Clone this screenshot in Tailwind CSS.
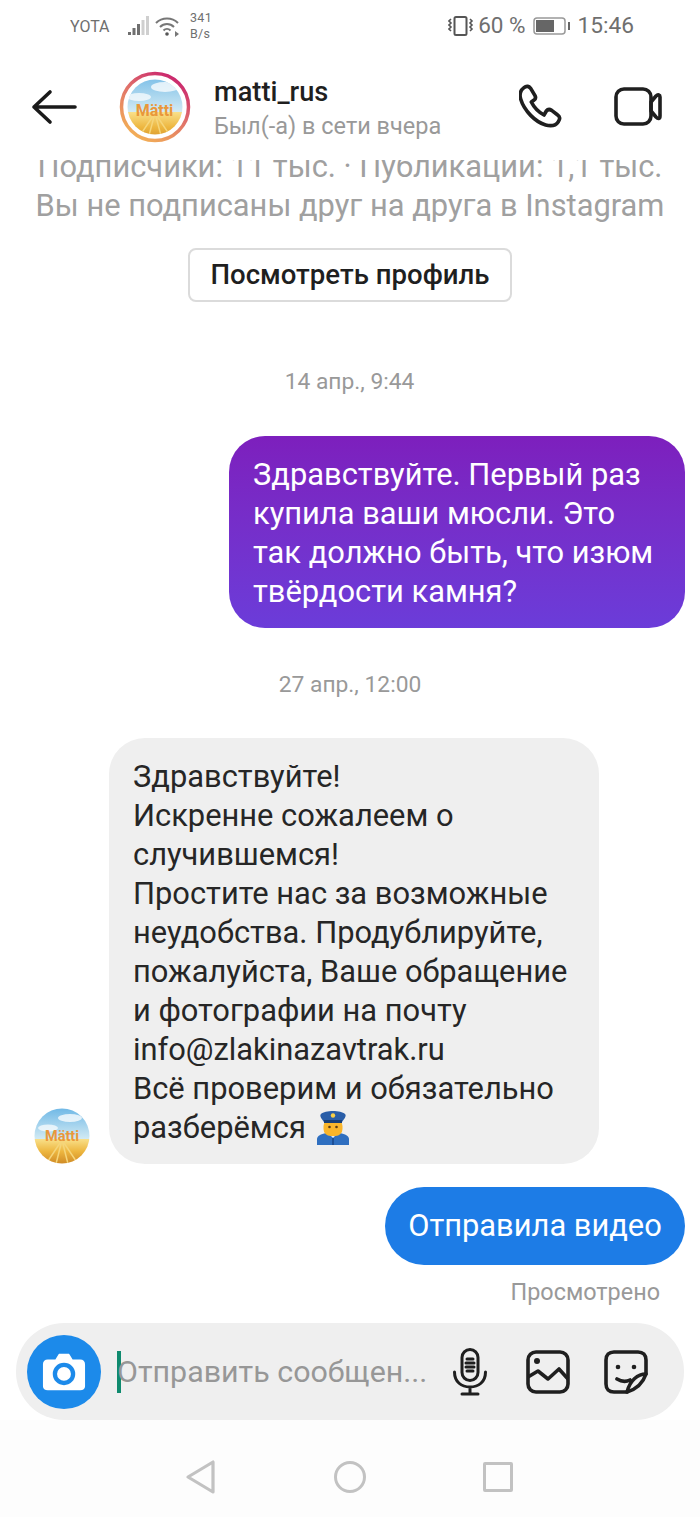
<!DOCTYPE html>
<html lang="ru"><head><meta charset="utf-8">
<script src="https://cdn.jsdelivr.net/npm/@tailwindcss/browser@4"></script>
<title>matti_rus</title></head>
<body class="bg-white">
<div class="w-[700px] h-[1517px] overflow-hidden flex flex-col bg-white text-[#262626] font-['Roboto',sans-serif]">

<!-- status bar -->
<div class="h-[52px] shrink-0 flex items-center pl-[70px] pr-[66px] text-[#6f6f6f]">
  <span class="text-[16px] w-[58px] relative top-px">YOTA</span>
  <svg class="w-[22px] h-[24px]" viewBox="0 0 22 24"><g fill="#6f6f6f"><rect x="0" y="18" width="3" height="3"/><rect x="4.500" y="14" width="3" height="7"/><rect x="9" y="10" width="3" height="11"/></g><g fill="#cfcfcf"><rect x="13.500" y="6" width="3" height="15"/><rect x="18" y="2" width="3" height="19"/></g></svg>
  <svg class="w-[26px] h-[24px] ml-[5px]" viewBox="0 0 26 24" fill="none" stroke="#777" stroke-width="2"><path d="M1 9c6-6 16-6 22 0M5 13c4-4 10-4 14 0M8.500 16.500c2-2 5-2 7 0"/><circle cx="12" cy="20" r="1.800" fill="#555" stroke="none"/><path d="M20 17l4 3-4 3z" fill="#777" stroke="none"/></svg>
  <span class="ml-[9px] w-[24px] text-[12.500px] leading-[16px] tracking-[.3px]">341<br>B/s</span>
  <span class="flex-1"></span>
  <svg class="w-[26px] h-[22px]" viewBox="0 0 26 22" fill="none" stroke="#555"><rect x="6.500" y="2" width="12" height="18" rx="1.500" stroke-width="2"/><path d="M3 4l-2 2 2 2-2 2 2 2-2 2 2 2M22 4l2 2-2 2 2 2-2 2 2 2-2 2" stroke-width="1.600"/></svg>
  <span class="text-[22.500px] ml-[4px]">60 %</span>
  <svg class="w-[38px] h-[20px] ml-[7px]" viewBox="0 0 38 20"><rect x="1" y="2" width="31" height="16" rx="3" fill="none" stroke="#999" stroke-width="1.500"/><rect x="3" y="4" width="18" height="12" fill="#666"/><rect x="35" y="6" width="2" height="8" fill="#666"/></svg>
  <span class="text-[22.700px] ml-[7px]">15:46</span>
</div>

<!-- header -->
<div class="h-[108px] shrink-0 flex items-start bg-white pt-[20px]">
  <svg class="w-[46px] h-[36px] ml-[31px] mt-[17px]" viewBox="0 0 46 36" fill="none" stroke="#1a1a1a" stroke-width="3.600" stroke-linecap="round" stroke-linejoin="round"><path d="M3 18h41M19 3L3 18l16 15"/></svg>
  <svg class="w-[72px] h-[72px] ml-[42px] -mt-px" viewBox="0 0 72 72">
    <defs>
      <linearGradient id="ring" x1="0.800" y1="0" x2="0.200" y2="1"><stop offset="0" stop-color="#c81f6e"/><stop offset=".45" stop-color="#e0706a"/><stop offset="1" stop-color="#f4b455"/></linearGradient>
      <linearGradient id="sky" x1="0" y1="0" x2="0" y2="1"><stop offset="0" stop-color="#6fb8e6"/><stop offset="1" stop-color="#d5ecf4"/></linearGradient>
      <linearGradient id="wheat" x1="0" y1="0" x2="0" y2="1"><stop offset="0" stop-color="#f9e08a"/><stop offset=".5" stop-color="#edb63f"/><stop offset="1" stop-color="#cf8a25"/></linearGradient>
      <clipPath id="c1"><circle cx="36" cy="36" r="27.500"/></clipPath>
    </defs>
    <circle cx="36" cy="36" r="33.500" fill="none" stroke="url(#ring)" stroke-width="3.500"/>
    <g clip-path="url(#c1)"><rect width="72" height="42" fill="url(#sky)"/><ellipse cx="46" cy="16" rx="14" ry="5" fill="#fff" opacity=".75"/><ellipse cx="20" cy="26" rx="12" ry="4" fill="#fff" opacity=".7"/><rect y="41" width="72" height="31" fill="url(#wheat)"/><path d="M36 42L16 72M36 42l-8 30M36 42l8 30M36 42l20 30" stroke="#f5d57a" stroke-width="1.500"/></g>
    <text x="35.500" y="45" text-anchor="middle" font-family="Roboto" font-weight="700" font-size="16" fill="#e9973a">Mätti</text>
  </svg>
  <div class="ml-[23px]">
    <div class="text-[27.200px] leading-[40px] font-medium text-[#1f1f1f]">matti_rus</div>
    <div class="text-[23.500px] leading-[30px] text-[#999] -mt-[1px]">Был(-а) в сети вчера</div>
  </div>
  <span class="flex-1"></span>
  <svg class="w-[44px] h-[44px] mt-[12px]" viewBox="510 255 132 132" fill="none" stroke="#1f1f1f" stroke-width="11" stroke-linejoin="round"><path d="M525 266C533 259 540 262 545 268L558 290C561 296 559 301 554 304L547 309C555 325 570 340 585 348L592 336C596 331 603 331 608 334L626 348C633 353 634 360 628 368C620 380 605 382 590 378C560 370 525 335 515 300C510 285 515 274 525 266Z"/></svg>
  <svg class="w-[48px] h-[40px] ml-[51px] mr-[38px] mt-[15px]" viewBox="0 0 48 40" fill="none" stroke="#1f1f1f" stroke-width="3.600" stroke-linejoin="round"><rect x="2" y="2" width="35" height="35" rx="8"/><path d="M37 15l5-6c2-2 4-1 4 1v19c0 3-2 3-4 1l-5-6z"/></svg>
</div>

<!-- messages -->
<div class="flex-1 min-h-0 overflow-hidden flex flex-col">
  <div class="-mt-[13px] text-center text-[30.850px] leading-[39px] text-[#a0a0a0] whitespace-nowrap">
    <p>Подписчики: 11 тыс. · Публикации: 1,1 тыс.</p>
    <p>Вы не подписаны друг на друга в Instagram</p>
  </div>
  <div class="self-center mt-[23px] w-[324px] h-[54px] rounded-[8px] border-2 border-[#dbdbdb] flex items-center justify-center text-[27.600px] font-medium text-[#1f1f1f] shrink-0">Посмотреть профиль</div>
  <div class="mt-[66px] text-center text-[22.800px] leading-[28px] text-[#999] pr-px">14 апр., 9:44</div>
  <div class="mt-[40px] self-end mr-[15px] w-[456px] h-[192px] shrink-0 rounded-[36px] bg-gradient-to-b from-[#7d1fbd] to-[#6b3cd9] text-white text-[30.850px] leading-[39px] pl-[24px] pt-[19px] whitespace-nowrap">Здравствуйте. Первый раз<br>купила ваши мюсли. Это<br>так должно быть, что изюм<br>твёрдости камня?</div>
  <div class="mt-[43px] text-center text-[22.800px] leading-[28px] text-[#999]">27 апр., 12:00</div>
  <div class="mt-[39px] flex items-end shrink-0">
    <svg class="w-[56px] h-[56px] ml-[34px] shrink-0" viewBox="0 0 56 56">
      <defs><clipPath id="c2"><circle cx="28" cy="28" r="27.500"/></clipPath></defs>
      <g clip-path="url(#c2)"><rect width="56" height="32" fill="url(#sky)"/><ellipse cx="36" cy="10" rx="12" ry="4" fill="#fff" opacity=".75"/><ellipse cx="14" cy="20" rx="10" ry="3.500" fill="#fff" opacity=".7"/><rect y="31" width="56" height="25" fill="url(#wheat)"/><path d="M28 32L12 56M28 32l-6 24M28 32l6 24M28 32l16 24" stroke="#f5d57a" stroke-width="1.500"/></g>
      <text x="28" y="33" text-anchor="middle" font-family="Roboto" font-weight="700" font-size="14.500" fill="#e9973a">Mätti</text>
    </svg>
    <div class="ml-[19px] w-[490px] h-[426px] rounded-[36px] bg-[#efefef] text-[30.850px] leading-[39px] pl-[24px] pt-[19px] whitespace-nowrap">Здравствуйте!<br>Искренне сожалеем о<br>случившемся!<br>Простите нас за возможные<br>неудобства. Продублируйте,<br>пожалуйста, Ваше обращение<br>и фотографии на почту<br>info@zlakinazavtrak.ru<br>Всё проверим и обязательно<br><span class="inline-flex items-center gap-[11px]">разберёмся
      <svg class="w-[32px] h-[35px]" viewBox="0 0 32 35"><path d="M0 35v-6c0-3 4-5 9-6h14c5 1 9 3 9 6v6z" fill="#2f6fc0"/><path d="M11 23l5 5 5-5z" fill="#e8eef7"/><rect x="15" y="28" width="2" height="7" fill="#1d4f96"/><rect x="6.500" y="9" width="19" height="17" rx="7" fill="#f9b52b"/><path d="M7 12C5 9 2 6 4 4c4-4 20-4 24 0 2 2-1 5-3 8z" fill="#2a5ea8"/><rect x="7" y="10" width="18" height="3" fill="#173f78"/><circle cx="16" cy="5.500" r="2.200" fill="#f7cf48"/><circle cx="12.500" cy="17" r="1.300" fill="#5b3a16"/><circle cx="19.500" cy="17" r="1.300" fill="#5b3a16"/></svg></span></div>
  </div>
  <div class="mt-[23px] self-end mr-[15px] w-[300px] h-[78px] shrink-0 rounded-[39px] bg-[#1d7ce6] text-white text-[30.850px] flex items-center justify-center whitespace-nowrap">Отправила видео</div>
  <div class="mt-[13px] self-end mr-[40px] text-[23.400px] leading-[28px] text-[#999]">Просмотрено</div>
</div>

<!-- composer -->
<div class="mx-[16px] h-[97px] shrink-0 rounded-[48px] bg-[#efefef] flex items-center pl-[11px]">
  <div class="w-[74px] h-[74px] rounded-full bg-[#1c8aea] flex items-center justify-center shrink-0">
    <svg class="w-[44px] h-[40px]" viewBox="0 0 46 40"><path d="M6 7h8l3-5c.5-1 1-1 2-1h8c1 0 1.500 0 2 1l3 5h8c3 0 5 2 5 5v23c0 3-2 4-5 4H6c-3 0-5-1-5-4V12c0-3 2-5 5-5z" fill="#fff"/><circle cx="23" cy="22" r="9.500" fill="none" stroke="#1c8aea" stroke-width="4.500"/></svg>
  </div>
  <div class="w-[4px] h-[42px] bg-[#0f8a6e] ml-[16px] shrink-0"></div>
  <span class="text-[30.400px] text-[#979797] ml-[-4px] whitespace-nowrap">Отправить сообщен...</span>
  <span class="flex-1"></span>
  <svg class="w-[34px] h-[48px]" viewBox="0 0 34 48" fill="none" stroke="#1f1f1f" stroke-width="3" stroke-linecap="round"><rect x="9" y="1.500" width="16" height="31" rx="8"/><path d="M1.500 24c0 10 7 15 15.500 15s15.500-5 15.500-15M17 39v6M9 46h16M14 11h6M13 15h8M13 19h8M14 23h6"/></svg>
  <svg class="w-[44px] h-[44px] ml-[39px]" viewBox="0 0 44 44" fill="none" stroke="#1f1f1f" stroke-width="3.600" stroke-linejoin="round"><rect x="2" y="2" width="40" height="40" rx="8"/><circle cx="11" cy="11" r="3" fill="#1f1f1f" stroke="none"/><path d="M2 27l10-6 10 8 11-10 9 10"/></svg>
  <svg class="w-[44px] h-[44px] ml-[34px] mr-[36px]" viewBox="0 0 44 44" fill="none" stroke="#1f1f1f" stroke-width="3.600" stroke-linejoin="round" stroke-linecap="round"><path d="M42 24V10c0-5-3-8-8-8H10c-5 0-8 3-8 8v24c0 5 3 8 8 8h13c10-3 16-9 19-18z"/><path d="M42 24c-8 0-16 6-19 18M13 29c5 3 9 3 13 1"/><circle cx="14" cy="17" r="2.300" fill="#1f1f1f" stroke="none"/><circle cx="30" cy="17" r="2.300" fill="#1f1f1f" stroke="none"/></svg>
</div>

<!-- nav -->
<div class="h-[97px] shrink-0 bg-[#fdfdfd] flex items-center pl-[185px] pt-[16px]">
  <svg class="w-[32px] h-[36px]" viewBox="0 0 32 36" fill="none" stroke="#c2c2c2" stroke-width="3.200" stroke-linejoin="round"><path d="M28 3v30L3 18z"/></svg>
  <div class="w-[32px] h-[32px] rounded-full border-[3px] border-[#c2c2c2] ml-[117px]"></div>
  <div class="w-[30px] h-[30px] rounded-[2px] border-[3px] border-[#c2c2c2] ml-[117px]"></div>
</div>
</div>
</body></html>
